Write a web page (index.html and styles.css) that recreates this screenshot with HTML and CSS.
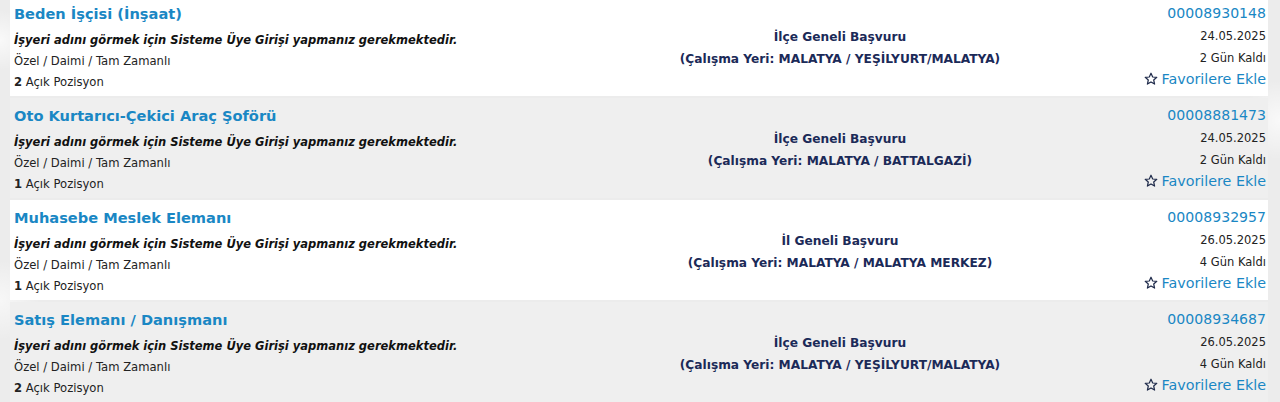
FILE: index.html
```html
<!DOCTYPE html>
<html lang="tr">
<head>
<meta charset="utf-8">
<title>İlanlar</title>
<link rel="stylesheet" href="styles.css">
</head>
<body>
<div class="list">
  <div class="job">
    <div class="col-left">
      <a class="title">Beden İşçisi (İnşaat)</a>
      <div class="firm">İşyeri adını görmek için Sisteme Üye Girişi yapmanız gerekmektedir.</div>
      <div class="line">Özel / Daimi / Tam Zamanlı</div>
      <div class="line"><b>2</b> Açık Pozisyon</div>
    </div>
    <div class="col-mid">
      <div>İlçe Geneli Başvuru</div>
      <div>(Çalışma Yeri: MALATYA / YEŞİLYURT/MALATYA)</div>
    </div>
    <div class="col-right">
      <a class="code">00008930148</a>
      <div class="line">24.05.2025</div>
      <div class="line">2 Gün Kaldı</div>
      <a class="fav"><svg class="star" viewBox="0 0 14 14" width="14" height="14"><path d="M7 1.2 L8.7 5 L12.8 5.3 L9.7 8 L10.6 12.1 L7 9.9 L3.4 12.1 L4.3 8 L1.2 5.3 L5.3 5 Z" fill="none" stroke="#1e2a4a" stroke-width="1.2" stroke-linejoin="round"/></svg>Favorilere Ekle</a>
    </div>
  </div>
  <div class="job alt">
    <div class="col-left">
      <a class="title">Oto Kurtarıcı-Çekici Araç Şoförü</a>
      <div class="firm">İşyeri adını görmek için Sisteme Üye Girişi yapmanız gerekmektedir.</div>
      <div class="line">Özel / Daimi / Tam Zamanlı</div>
      <div class="line"><b>1</b> Açık Pozisyon</div>
    </div>
    <div class="col-mid">
      <div>İlçe Geneli Başvuru</div>
      <div>(Çalışma Yeri: MALATYA / BATTALGAZİ)</div>
    </div>
    <div class="col-right">
      <a class="code">00008881473</a>
      <div class="line">24.05.2025</div>
      <div class="line">2 Gün Kaldı</div>
      <a class="fav"><svg class="star" viewBox="0 0 14 14" width="14" height="14"><path d="M7 1.2 L8.7 5 L12.8 5.3 L9.7 8 L10.6 12.1 L7 9.9 L3.4 12.1 L4.3 8 L1.2 5.3 L5.3 5 Z" fill="none" stroke="#1e2a4a" stroke-width="1.2" stroke-linejoin="round"/></svg>Favorilere Ekle</a>
    </div>
  </div>
  <div class="job">
    <div class="col-left">
      <a class="title">Muhasebe Meslek Elemanı</a>
      <div class="firm">İşyeri adını görmek için Sisteme Üye Girişi yapmanız gerekmektedir.</div>
      <div class="line">Özel / Daimi / Tam Zamanlı</div>
      <div class="line"><b>1</b> Açık Pozisyon</div>
    </div>
    <div class="col-mid">
      <div>İl Geneli Başvuru</div>
      <div>(Çalışma Yeri: MALATYA / MALATYA MERKEZ)</div>
    </div>
    <div class="col-right">
      <a class="code">00008932957</a>
      <div class="line">26.05.2025</div>
      <div class="line">4 Gün Kaldı</div>
      <a class="fav"><svg class="star" viewBox="0 0 14 14" width="14" height="14"><path d="M7 1.2 L8.7 5 L12.8 5.3 L9.7 8 L10.6 12.1 L7 9.9 L3.4 12.1 L4.3 8 L1.2 5.3 L5.3 5 Z" fill="none" stroke="#1e2a4a" stroke-width="1.2" stroke-linejoin="round"/></svg>Favorilere Ekle</a>
    </div>
  </div>
  <div class="job alt">
    <div class="col-left">
      <a class="title">Satış Elemanı / Danışmanı</a>
      <div class="firm">İşyeri adını görmek için Sisteme Üye Girişi yapmanız gerekmektedir.</div>
      <div class="line">Özel / Daimi / Tam Zamanlı</div>
      <div class="line"><b>2</b> Açık Pozisyon</div>
    </div>
    <div class="col-mid">
      <div>İlçe Geneli Başvuru</div>
      <div>(Çalışma Yeri: MALATYA / YEŞİLYURT/MALATYA)</div>
    </div>
    <div class="col-right">
      <a class="code">00008934687</a>
      <div class="line">26.05.2025</div>
      <div class="line">4 Gün Kaldı</div>
      <a class="fav"><svg class="star" viewBox="0 0 14 14" width="14" height="14"><path d="M7 1.2 L8.7 5 L12.8 5.3 L9.7 8 L10.6 12.1 L7 9.9 L3.4 12.1 L4.3 8 L1.2 5.3 L5.3 5 Z" fill="none" stroke="#1e2a4a" stroke-width="1.2" stroke-linejoin="round"/></svg>Favorilere Ekle</a>
    </div>
  </div>
</div>
</body>
</html>
```

FILE: styles.css
```css
html, body {
  margin: 0;
  padding: 0;
}
body {
  background-color: #ececec;
  background-image:
    radial-gradient(circle at 0 40px, rgba(255,255,255,0.7) 0, rgba(255,255,255,0) 30px),
    radial-gradient(circle at 1280px 120px, rgba(255,255,255,0.7) 0, rgba(255,255,255,0) 40px),
    radial-gradient(circle at 0 300px, rgba(255,255,255,0.6) 0, rgba(255,255,255,0) 40px);
  font-family: "DejaVu Sans", Verdana, sans-serif;
  font-size: 12px;
  color: #222;
  height: 402px;
  overflow: hidden;
}
.list {
  margin: -4px 12px 0 10px;
  display: flex;
  flex-direction: column;
  gap: 2px;
}
.job {
  display: grid;
  grid-template-columns: 625px 402px 1fr;
  background: #ffffff;
  padding: 6px 2px 5px 4px;
  height: 89px;
}
.job.alt {
  background: #efefef;
}
.col-left, .col-right {
  display: flex;
  flex-direction: column;
}
.col-right {
  align-items: flex-end;
}
.title {
  font-size: 14.6px;
  font-weight: bold;
  color: #1a87c4;
  line-height: 24px;
  margin-bottom: 4px;
}
.firm {
  font-size: 11.5px;
  font-weight: bold;
  font-style: italic;
  color: #111;
  line-height: 21px;
}
.line {
  font-size: 11.6px;
  line-height: 21px;
  color: #222;
}
.col-right .line {
  font-size: 11.5px;
  line-height: 22px;
}
.line b {
  font-weight: bold;
}
.col-mid {
  display: flex;
  flex-direction: column;
  justify-content: center;
  align-items: center;
  font-size: 12.2px;
  font-weight: bold;
  color: #1b2a58;
  line-height: 22px;
  padding-top: 1px;
}
.code {
  font-size: 14.1px;
  color: #1a87c4;
  line-height: 23px;
}
.fav {
  font-size: 14.3px;
  color: #1a87c4;
  line-height: 20px;
  display: flex;
  align-items: center;
  gap: 4px;
}
.star {
  display: block;
}
```
